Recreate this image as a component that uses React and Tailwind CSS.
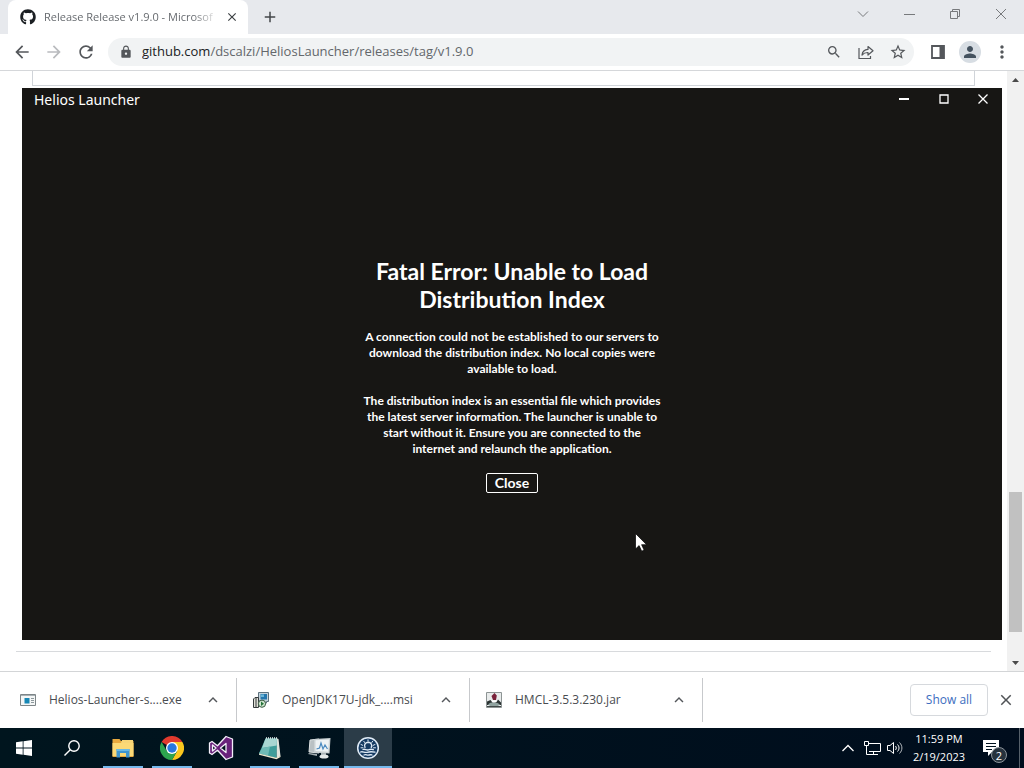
import React from "react";
import { FaGithub } from "react-icons/fa";
import {
  MdArrowBack, MdArrowForward, MdRefresh, MdLock, MdSearch, MdStarBorder,
  MdMoreVert, MdClose, MdAdd, MdKeyboardArrowUp, MdPerson,
} from "react-icons/md";

const iconButton = "flex h-8 w-8 shrink-0 items-center justify-center text-[#54575b]";

function CaptionButton({ label, children }) {
  return (
    <button type="button" aria-label={label} className="flex h-7 w-[46px] items-center justify-center text-[#77797c]">
      {children}
    </button>
  );
}

function TabStrip() {
  return (
    <header className="flex h-[34px] shrink-0 bg-[#e7e9ed] pl-2">
      <div className="flex w-60 shrink-0 items-center rounded-t-lg bg-white pr-2 pl-3">
        <FaGithub className="h-4 w-4 shrink-0 text-[#1b1f23]" />
        <span className="ml-2 bg-linear-to-r from-[#5f6368] from-88% to-[#dddddd] bg-clip-text text-[11px] whitespace-nowrap text-transparent">
          Release Release v1.9.0 - Microsof
        </span>
        <button type="button" aria-label="Close tab" className="ml-auto flex h-4 w-4 shrink-0 items-center justify-center text-[#3c4043]">
          <MdClose className="h-[14px] w-[14px]" />
        </button>
      </div>
      <button type="button" aria-label="New tab" className="ml-3 flex w-5 items-center justify-center text-[#44474a]">
        <MdAdd className="h-[18px] w-[18px]" />
      </button>
      <div className="ml-auto flex">
        <CaptionButton label="Search tabs">
          <svg width="12" height="8" viewBox="0 0 12 8" fill="none" stroke="currentColor"><path d="M1 1.5 6 6.5 11 1.5" /></svg>
        </CaptionButton>
        <CaptionButton label="Minimize">
          <svg width="12" height="12" viewBox="0 0 12 12" fill="none" stroke="currentColor"><path d="M1 6.5h11" /></svg>
        </CaptionButton>
        <CaptionButton label="Restore">
          <svg width="12" height="12" viewBox="0 0 12 12" fill="none" stroke="currentColor"><path d="M1.500 3.500h7v7h-7zM3.500 3.500v-2h7v7h-2" /></svg>
        </CaptionButton>
        <CaptionButton label="Close">
          <svg width="12" height="12" viewBox="0 0 12 12" fill="none" stroke="currentColor"><path d="M1 1 11 11M11 1 1 11" /></svg>
        </CaptionButton>
      </div>
    </header>
  );
}

function Toolbar() {
  return (
    <div className="flex h-[37px] shrink-0 items-center border-b border-[#d5d7da] bg-white px-[6px]">
      <button type="button" aria-label="Back" className={iconButton}><MdArrowBack className="h-5 w-5" /></button>
      <button type="button" aria-label="Forward" className="flex h-8 w-8 shrink-0 items-center justify-center text-[#b9bbbe]"><MdArrowForward className="h-5 w-5" /></button>
      <button type="button" aria-label="Reload" className={iconButton}><MdRefresh className="h-5 w-5" /></button>
      <div className="mr-2 ml-[6px] flex h-7 min-w-0 flex-1 items-center rounded-full bg-[#f1f3f4] pl-[11px]">
        <MdLock className="h-[14px] w-[14px] shrink-0 text-[#54575b]" />
        <a href="#release" className="ml-[9px] min-w-0 flex-1 truncate text-[13px] text-[#63676b]">
          <span className="text-[#202124]">github.com</span>/dscalzi/HeliosLauncher/releases/tag/v1.9.0
        </a>
        <button type="button" aria-label="Zoom" className={iconButton}><MdSearch className="h-4 w-4" /></button>
        <button type="button" aria-label="Share" className={iconButton}>
          <svg width="16" height="16" viewBox="0 0 16 16" fill="none" stroke="currentColor" strokeWidth="1.200">
            <path d="M1 4v10.500h11.500V12" />
            <path d="M4 11c.4-3.500 2.600-5.400 6-5.600V2.500l5 4.300-5 4.200V8.500C7.500 8.400 5.600 9.200 4 11z" strokeLinejoin="round" />
          </svg>
        </button>
        <button type="button" aria-label="Bookmark" className={iconButton}><MdStarBorder className="h-[18px] w-[18px]" /></button>
      </div>
      <button type="button" aria-label="Side panel" className={iconButton}>
        <svg width="14" height="14" viewBox="0 0 14 14"><path d="M1 1h12v12H1z" fill="none" stroke="currentColor" strokeWidth="1.800" /><path d="M8.500 1H13v12H8.500z" fill="currentColor" /></svg>
      </button>
      <button type="button" aria-label="Profile" className={iconButton}>
        <span className="flex h-[22px] w-[22px] items-center justify-center rounded-full bg-[#d7dde3] text-[#44525f]"><MdPerson className="h-[18px] w-[18px]" /></span>
      </button>
      <button type="button" aria-label="Menu" className={iconButton}><MdMoreVert className="h-5 w-5" /></button>
    </div>
  );
}

function Scrollbar() {
  return (
    <div className="flex w-[17px] shrink-0 flex-col bg-[#f1f1f1]">
      <button type="button" aria-label="Scroll up" className="flex h-[17px] items-center justify-center text-[#4a4a4a]">
        <svg width="7" height="4" viewBox="0 0 7 4" fill="currentColor"><path d="M0 4 3.500 0 7 4z" /></svg>
      </button>
      <div className="grow-[404]" />
      <div className="mx-[2px] grow-[140] bg-[#c1c1c1]" />
      <div className="grow-[22]" />
      <button type="button" aria-label="Scroll down" className="flex h-[17px] items-center justify-center text-[#4a4a4a]">
        <svg width="7" height="4" viewBox="0 0 7 4" fill="currentColor"><path d="M0 0 3.500 4 7 0z" /></svg>
      </button>
    </div>
  );
}

function Launcher() {
  return (
    <section className="absolute inset-x-[22px] top-[17px] bottom-[31px] flex flex-col bg-[#171614] font-[Lato,sans-serif] text-white">
      <div className="flex h-[22px] shrink-0 items-center justify-between pl-3">
        <h1 className="font-['Noto_Sans',sans-serif] text-[14px]">Helios Launcher</h1>
        <div className="flex">
          <button type="button" aria-label="Minimize launcher" className="flex h-[22px] w-10 items-center justify-center">
            <svg width="10" height="10" viewBox="0 0 10 10" stroke="currentColor" strokeWidth="2"><path d="M0 5h10" /></svg>
          </button>
          <button type="button" aria-label="Maximize launcher" className="flex h-[22px] w-10 items-center justify-center">
            <svg width="10" height="10" viewBox="0 0 10 10" fill="none" stroke="currentColor" strokeWidth="1.300"><path d="M1 1h8v8H1z" /></svg>
          </button>
          <button type="button" aria-label="Close launcher" className="flex h-[22px] w-[38px] items-center justify-center">
            <svg width="10" height="10" viewBox="0 0 10 10" stroke="currentColor" strokeWidth="1.300"><path d="M.5.5 9.500 9.500M9.500.5.5 9.500" /></svg>
          </button>
        </div>
      </div>
      <div className="flex flex-1 flex-col items-center justify-center text-center font-bold">
        <h2 className="text-[23px] leading-7">
          Fatal Error: Unable to Load<br />Distribution Index
        </h2>
        <p className="mt-4 text-[12px] leading-4">
          A connection could not be established to our servers to<br />
          download the distribution index. No local copies were<br />
          available to load.
        </p>
        <p className="mt-4 text-[12px] leading-4">
          The distribution index is an essential file which provides<br />
          the latest server information. The launcher is unable to<br />
          start without it. Ensure you are connected to the<br />
          internet and relaunch the application.
        </p>
        <button type="button" className="mt-4 h-5 rounded-xs border border-white px-2 text-[14px] leading-4">Close</button>
      </div>
    </section>
  );
}

function InstallerIcon() {
  return (
    <svg width="16" height="16" viewBox="0 0 16 16">
      <path d="M.5 2.500h15v11H.5z" fill="#f4f6f6" stroke="#7d8588" /><path d="M1 3h14v1H1z" fill="#a8b0b3" />
      <path d="M4.500 6h5v5.500h-5z" fill="#1687b5" /><path d="M11 6.500h3M11 8.500h3M11 10.500h3" stroke="#8d989c" />
    </svg>
  );
}

function MsiIcon() {
  return (
    <svg width="16" height="16" viewBox="0 0 16 16">
      <path d="M5.500.5h10v9h-2v1.500h-6V9h-2z" fill="#c3d3dc" stroke="#5d717d" />
      <path d="M7.500 2h6.500v5.500H7.500z" fill="#2476ad" /><path d="M8 2.500h3v2.500H8z" fill="#69b6d8" />
      <path d="M.5 7 2 5.500h3.500v10h-5z" fill="#dfdfd6" stroke="#343a3c" /><path d="M3 6v9" stroke="#343a3c" />
      <circle cx="9" cy="11.700" r="3.600" fill="#cfe5cf" stroke="#38583f" /><path d="m8 9.500 3 2.200-3 2.300z" fill="#267339" />
    </svg>
  );
}

function JarIcon() {
  return (
    <svg width="16" height="16" viewBox="0 0 16 16">
      <path d="M.5.5h15v15H.5z" fill="#e8ebeb" stroke="#8d9494" />
      <path d="M1 9.500 4.500 8l2 2h4l1.500-2.500 3 3V13H1z" fill="#2b3333" />
      <path d="M2 12.500c3-3 8-3 12 0L12 14H4z" fill="#8fa29f" /><path d="M5 8.500h6l-1.500 2h-3z" fill="#fff" />
      <path d="m8.500 1 2.300 2.500L10 8H7L5.500 4z" fill="#79213a" /><path d="M1 14.500h14" stroke="#414848" />
    </svg>
  );
}

const downloads = [
  { name: "Helios-Launcher-s....exe", icon: <InstallerIcon /> },
  { name: "OpenJDK17U-jdk_....msi", icon: <MsiIcon /> },
  { name: "HMCL-3.5.3.230.jar", icon: <JarIcon /> },
];

function DownloadShelf() {
  return (
    <div className="flex h-[57px] shrink-0 items-center border-t border-[#d3d5d7] bg-white pl-1">
      {downloads.map((d) => (
        <div key={d.name} className="flex h-11 w-[233px] items-center border-r border-[#c7c9cc] pr-3 pl-4">
          <span className="shrink-0">{d.icon}</span>
          <span className="ml-[13px] text-[12px] whitespace-nowrap text-[#494c50]">{d.name}</span>
          <button type="button" aria-label={"Options for " + d.name} className="ml-auto flex w-[22px] shrink-0 items-center justify-center text-[#54575b]">
            <MdKeyboardArrowUp className="h-[18px] w-[18px]" />
          </button>
        </div>
      ))}
      <button type="button" className="ml-auto h-8 w-[78px] rounded-sm border border-[#d6d9dd] text-[12px] font-medium text-[#3c6dc0]">Show all</button>
      <button type="button" aria-label="Close downloads" className="mr-2 ml-2 flex h-5 w-5 items-center justify-center text-[#505356]">
        <MdClose className="h-[18px] w-[18px]" />
      </button>
    </div>
  );
}

function FolderIcon() {
  return (
    <svg width="24" height="24" viewBox="0 0 24 24">
      <path d="M1.500 3h7l1.500 2h12.500v16h-21z" fill="#e8a93f" /><path d="M1.500 7h21v13h-21z" fill="#fbd976" />
      <path d="M11 4h11v3H10z" fill="#f7d576" />
      <path d="M5.500 21.500V13h13v8.500H15V17H9v4.500z" fill="#3f95cf" /><path d="M5.500 13h13v2h-13z" fill="#69b9e5" />
    </svg>
  );
}

function ChromeIcon() {
  return (
    <svg width="24" height="24" viewBox="0 0 24 24">
      <path d="M1.600 6A12 12 0 0 1 22.400 6L12 12z" fill="#e03a2e" />
      <path d="M22.400 6A12 12 0 0 1 12 24l5.200-9L12 6z" fill="#fbc71e" />
      <path d="M1.600 6A12 12 0 0 0 12 24l5.200-9H6.800z" fill="#2da44e" />
      <circle cx="12" cy="12" r="6" fill="#fff" /><circle cx="12" cy="12" r="4.700" fill="#2878df" />
    </svg>
  );
}

function VisualStudioIcon() {
  return (
    <svg width="26" height="26" viewBox="0 0 26 26">
      <path d="M1.500 8 4 6.500l5.500 4.200L18 1.500l6.500 2.500v18L18 24.500l-8.500-9.200L4 19.500 1.500 18zM4.500 10v6L8 13zM18 8.500 12.500 13l5.500 4.500z" fill="#68217a" fillRule="evenodd" stroke="#f4effa" strokeWidth="1.300" strokeLinejoin="round" />
    </svg>
  );
}

function NotepadIcon() {
  return (
    <svg width="26" height="26" viewBox="0 0 26 26">
      <path d="m19 3 2.500 1 2 17-4 2.500z" fill="#dfe3dc" />
      <path d="M8.500 3.500H20L19.500 23 2 18.500z" fill="#3f9d9a" />
      <path d="M8.500 3.500H20l-.3 7L5 13z" fill="#a9d6d2" />
      <path d="M5 13l8-1.500-2 9.300L2 18.500z" fill="#6fbab5" />
      <path d="m2 18.500 17.500 4.300 4-2v1.200l-4 2.200L2 19.800z" fill="#efe9cf" />
      <path d="M9 3h12" stroke="#e9f0ef" strokeWidth="1.500" strokeDasharray="1 1" />
    </svg>
  );
}

function MonitorIcon() {
  return (
    <svg width="26" height="26" viewBox="0 0 26 26">
      <path d="m4 5 9-1v14l-10-1z" fill="#b9c1c4" stroke="#dde1e2" /><path d="m3 18 8 1v2l-9-2z" fill="#a3adb1" />
      <path d="m8 4 16.500-1-1 15.500-15.500-1z" fill="#cbd2d4" /><path d="m9.500 5.300 13.500-.8-.8 12.300-12.700-.8z" fill="#edf2f4" />
      <path d="m10.500 14 3-1 1.500-5 2 6 2-4 2.500 4" fill="none" stroke="#4a8ac0" strokeWidth="1.200" />
      <path d="M15 18h5v3h-5z" fill="#a9b3b7" /><ellipse cx="18" cy="21.500" rx="4.500" ry="2" fill="#e3e8e9" />
    </svg>
  );
}

function HeliosIcon() {
  return (
    <svg width="24" height="24" viewBox="0 0 24 24" fill="none" stroke="#dfeaf5" strokeLinecap="round">
      <circle cx="12" cy="12" r="10.300" fill="#153a62" strokeWidth="1.500" />
      <path d="M9 11.300c-1.600-3 1-5 3.300-5 2.400.1 4.300 2.700 3 5" strokeWidth="1.400" />
      <path d="M12 3.800v1.300M7.800 5.300l.8 1.200M16.600 5.300l-.8 1.200M5 8.500l1.700.8M19 8.500l-1.700.8M5 11.800h2M17.500 11.800h2" />
      <path d="M7 13.500c2-1 3.300 1 5.300.4s3-1.200 5-.2M4.500 16c2.500-1 4 1 6.500.3s4-1 8-.1M8 19c2-1 3 .5 5 0s2-.4 3 0" strokeWidth="1.300" />
    </svg>
  );
}

const apps = [
  { name: "File Explorer", icon: <FolderIcon />, open: true },
  { name: "Google Chrome", icon: <ChromeIcon />, open: true },
  { name: "Visual Studio", icon: <VisualStudioIcon />, open: false },
  { name: "Notepad", icon: <NotepadIcon />, open: true },
  { name: "System Monitor", icon: <MonitorIcon />, open: true },
];

function Taskbar() {
  return (
    <footer className="flex h-10 shrink-0 items-stretch bg-linear-to-r from-[#00151e] to-[#000d1d] text-white">
      <button type="button" aria-label="Start" className="flex w-12 items-center justify-center">
        <svg width="16" height="16" viewBox="0 0 16 16" fill="currentColor"><path d="m0 2.300 6.700-1v6.300H0zM7.500 1.200 16 0v7.600H7.500zM0 8.400h6.700v6.300l-6.700-1zM7.500 8.400H16V16l-8.500-1.200z" /></svg>
      </button>
      <button type="button" aria-label="Search" className="flex w-12 items-center justify-center">
        <svg width="16" height="16" viewBox="0 0 16 16" fill="none" stroke="currentColor" strokeWidth="1.400"><circle cx="10" cy="6" r="5.200" /><path d="M6.300 9.700.5 15.500" /></svg>
      </button>
      <div className="ml-[3px] flex gap-px">
        {apps.map((a) => (
          <button key={a.name} type="button" aria-label={a.name} className="flex w-12 flex-col px-1">
            <span className="flex flex-1 items-center justify-center self-stretch pt-[2px]">{a.icon}</span>
            <span className={a.open ? "h-[2px] self-stretch bg-[#76b9ed]" : "h-[2px] self-stretch"} />
          </button>
        ))}
        <button type="button" aria-label="Helios Launcher" className="flex w-12 flex-col bg-[#2b3c48]">
          <span className="flex flex-1 items-center justify-center self-stretch pt-[2px]"><HeliosIcon /></span>
          <span className="h-[2px] self-stretch bg-[#76b9ed]" />
        </button>
      </div>
      <div className="ml-auto flex items-center">
        <button type="button" aria-label="Show hidden icons" className="flex w-6 justify-center">
          <svg width="12" height="8" viewBox="0 0 12 8" fill="none" stroke="currentColor" strokeWidth="1.300"><path d="M.5 7 6 1.500 11.500 7" /></svg>
        </button>
        <button type="button" aria-label="Network" className="flex w-6 justify-center">
          <svg width="17" height="14" viewBox="0 0 17 14" fill="none" stroke="currentColor"><path d="M5 2.500h11.500v8H5M9.500 10.500v3M6 13.500h8M.5.5h4v4h-4zM2.500 4.500v9H6" /></svg>
        </button>
        <button type="button" aria-label="Volume" className="flex w-[22px] justify-center">
          <svg width="16" height="14" viewBox="0 0 16 14" fill="none" stroke="currentColor"><path d="M.5 4.500H3l3.500-3v11l-3.500-3H.5zM8.500 5c1 1.200 1 2.800 0 4M10.500 3.500c2 2 2 5 0 7" /><path d="M12.500 1.500c3.200 3.300 3.200 7.700 0 11" opacity=".7" /></svg>
        </button>
        <button type="button" className="w-[66px] text-center text-[11px] leading-[18px] whitespace-nowrap">
          <time dateTime="2023-02-19T23:59">11:59 PM<br />2/19/2023</time>
        </button>
        <button type="button" aria-label="2 notifications" className="relative ml-[11px] flex h-10 w-[24px] items-center">
          <svg width="17" height="17" viewBox="0 0 17 17"><path d="M0 0h16v12H9l-4 4v-4H0z" fill="#fff" /><path d="M3 3.500h10M3 6.500h10M3 9.500h6" stroke="#00121f" /></svg>
          <span className="absolute right-0 bottom-[5px] flex h-4 w-4 items-center justify-center rounded-full border border-[#8c949b] bg-[#26323d] text-[11px] leading-none">2</span>
        </button>
        <span className="ml-3 h-10 w-px bg-[#56606a]" />
        <span className="w-1" />
      </div>
    </footer>
  );
}

export default function App() {
  return (
    <div className="flex h-screen flex-col overflow-hidden bg-white font-['Open_Sans','Noto_Sans',sans-serif]">
      <TabStrip />
      <Toolbar />
      <main className="relative flex min-h-0 flex-1">
        <div className="flex flex-1 flex-col justify-between pr-4 pl-4">
          <div className="mr-4 ml-4 h-[15px] border-x border-b border-[#d0d4d9]" />
          <hr className="mb-[19px] border-[#d8dadd]" />
        </div>
        <Scrollbar />
        <Launcher />
        <svg className="pointer-events-none absolute top-[462px] left-[635px]" width="13" height="19" viewBox="0 0 13 19">
          <path d="M.5.5v15.500l3.600-3.400 2.600 5.600 2.400-1.100-2.500-5.400h5z" fill="#fff" stroke="#000" strokeWidth=".7" />
        </svg>
      </main>
      <DownloadShelf />
      <Taskbar />
    </div>
  );
}
